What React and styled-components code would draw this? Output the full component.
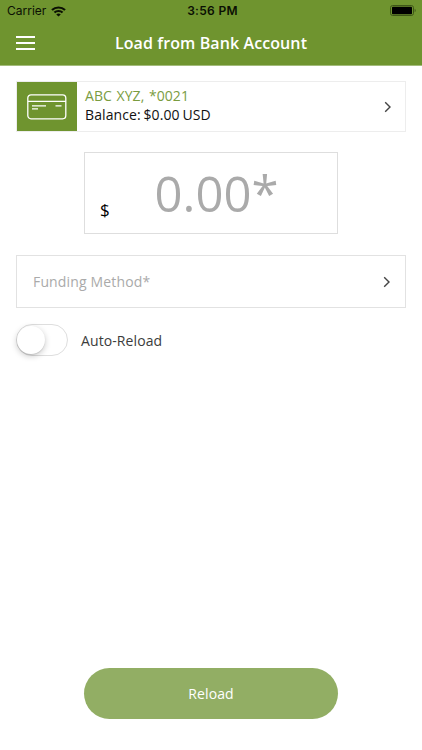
import React, { Component } from 'react';
import styled, { createGlobalStyle } from 'styled-components';

const GlobalStyle = createGlobalStyle`
    * {
        box-sizing: border-box;
    }
    body {
        margin: 0;
        background-color: white;
        font-family: 'Open Sans', 'Noto Sans', sans-serif;
    }
    button {
        font-family: inherit;
    }
`;

const Screen = styled.div`
    display: flex;
    flex-direction: column;
    width: 422px;
    height: 750px;
    overflow: hidden;
`;

const Header = styled.header`
    height: 66px;
    background-color: #6f942f;
    border-bottom: 1px solid #a3bb7b;
`;

const StatusBar = styled.div`
    display: grid;
    grid-template-columns: 1fr auto 1fr;
    align-items: center;
    height: 22px;
    padding: 0 6px 0 7px;
    color: #0b1003;
    font-family: Inter, 'Liberation Sans', sans-serif;
    font-size: 12px;
    line-height: 22px;
`;

const Carrier = styled.div`
    display: flex;
    align-items: center;
    gap: 5px;
`;

const Clock = styled.div`
    padding-left: 2px;
    font-weight: 600;
    letter-spacing: 0.3px;
`;

const Battery = styled.svg`
    justify-self: end;
`;

const NavBar = styled.div`
    display: grid;
    grid-template-columns: 19px 1fr 19px;
    align-items: center;
    height: 42px;
    padding: 0 16px;
`;

const MenuButton = styled.button`
    display: flex;
    flex-direction: column;
    gap: 4px;
    padding: 0;
    border: none;
    background: none;
`;

const MenuLine = styled.span`
    width: 19px;
    height: 2px;
    background-color: white;
`;

const Title = styled.h1`
    margin: 0;
    color: white;
    font-size: 16px;
    font-weight: 600;
    letter-spacing: 0.1px;
    line-height: 22px;
    text-align: center;
`;

const Content = styled.main`
    display: flex;
    flex: 1;
    flex-direction: column;
    padding: 15px 16px 31px;
`;

const Account = styled.div`
    display: flex;
    align-items: center;
    height: 51px;
    padding-right: 13px;
    border: 1px solid #ededed;
`;

const AccountIcon = styled.div`
    display: flex;
    align-items: center;
    justify-content: center;
    width: 60px;
    height: 49px;
    background-color: #6f942f;
`;

const AccountText = styled.div`
    flex: 1;
    padding: 0 0 4px 8px;
    font-size: 14px;
    line-height: 19px;
`;

const AccountName = styled.div`
    color: #7a9c3f;
    letter-spacing: 0.05px;
    word-spacing: 1px;
`;

const Balance = styled.div`
    color: #111;
    letter-spacing: 0.1px;
    word-spacing: -1px;
`;

const AmountBox = styled.div`
    display: flex;
    align-items: flex-end;
    align-self: center;
    width: 254px;
    height: 82px;
    margin-top: 20px;
    padding: 0 14px 11px 15px;
    border: 1px solid #dedede;
`;

const Currency = styled.span`
    width: 10px;
    padding-bottom: 1px;
    color: black;
    font-size: 17px;
    line-height: 23px;
`;

const Amount = styled.span`
    flex: 1;
    padding-bottom: 1px;
    color: #aaa;
    font-size: 49px;
    line-height: 56px;
    text-align: center;
`;

const Funding = styled.div`
    display: flex;
    align-items: center;
    justify-content: space-between;
    height: 53px;
    margin-top: 21px;
    padding: 0 14px 0 16px;
    border: 1px solid #e2e2e2;
    color: #aaa;
    font-size: 14px;
    letter-spacing: 0.15px;
`;

const AutoReload = styled.label`
    display: flex;
    align-items: center;
    gap: 13px;
    margin-top: 16px;
    color: #3c3c3c;
    font-size: 14px;
    letter-spacing: 0.1px;
`;

const Switch = styled.span`
    display: flex;
    width: 52px;
    height: 32px;
    padding: 1px 0;
    border: 1px solid #dedede;
    border-radius: 16px;
`;

const Knob = styled.span`
    width: 28px;
    height: 28px;
    border-radius: 50%;
    background-color: white;
    box-shadow: 0 2px 6px rgba(0, 0, 0, 0.22), 0 1px 1px rgba(0, 0, 0, 0.1);
`;

const ReloadButton = styled.button`
    align-self: center;
    width: 254px;
    height: 51px;
    margin-top: auto;
    border: none;
    border-radius: 26px;
    background-color: #92ae64;
    color: white;
    font-size: 14px;
    letter-spacing: 0.1px;
`;

const Chevron = () => (
    <svg width="8" height="12" viewBox="0 0 8 12" fill="none" stroke="#444" strokeWidth="1.4">
        <path d="M1.2 1.2L6 6L1.2 10.8" />
    </svg>
);

const WifiIcon = () => (
    <svg width="15" height="11" viewBox="0 0 14 11" preserveAspectRatio="none" fill="none" stroke="#0b1003" strokeWidth="2">
        <path d="M0.9 4C4.3 0.6 9.7 0.6 13.1 4" />
        <path d="M3.2 6.5C5.3 4.4 8.7 4.4 10.8 6.5" />
        <path d="M7 10.6L4.9 8.4C6.1 7.3 7.9 7.3 9.1 8.4Z" fill="#0b1003" stroke="none" />
    </svg>
);

const CardIcon = () => (
    <svg width="40" height="26" viewBox="0 0 40 26" fill="none" stroke="white" strokeWidth="1.3">
        <rect x="0.8" y="0.8" width="38" height="24" rx="3.2" />
        <path d="M1 7.3H39" />
        <path d="M5 11.9H19M5 14.9H11M28.5 11.9H34.5" />
    </svg>
);

export default class App extends Component {
    state = { amount: '0.00*' };

    render() {
        return (
            <Screen>
                <GlobalStyle />
                <Header>
                    <StatusBar>
                        <Carrier>
                            Carrier
                            <WifiIcon />
                        </Carrier>
                        <Clock>3:56 PM</Clock>
                        <Battery width="26" height="12" viewBox="0 0 26 12">
                            <rect x="0.5" y="0.5" width="23" height="10" rx="2.2" fill="none" stroke="#3f5718" />
                            <rect x="2" y="1.8" width="20" height="7.4" rx="0.8" fill="black" />
                            <path d="M24.7 3.8C26 4.4 26 6.6 24.7 7.2Z" fill="#3f5718" />
                        </Battery>
                    </StatusBar>
                    <NavBar>
                        <MenuButton aria-label="Menu">
                            <MenuLine />
                            <MenuLine />
                            <MenuLine />
                        </MenuButton>
                        <Title>Load from Bank Account</Title>
                    </NavBar>
                </Header>
                <Content>
                    <Account>
                        <AccountIcon>
                            <CardIcon />
                        </AccountIcon>
                        <AccountText>
                            <AccountName>ABC XYZ, *0021</AccountName>
                            <Balance>Balance: $0.00 USD</Balance>
                        </AccountText>
                        <Chevron />
                    </Account>
                    <AmountBox>
                        <Currency>$</Currency>
                        <Amount>{this.state.amount}</Amount>
                    </AmountBox>
                    <Funding>
                        Funding Method*
                        <Chevron />
                    </Funding>
                    <AutoReload>
                        <Switch>
                            <Knob />
                        </Switch>
                        Auto-Reload
                    </AutoReload>
                    <ReloadButton>Reload</ReloadButton>
                </Content>
            </Screen>
        )
    }
}
